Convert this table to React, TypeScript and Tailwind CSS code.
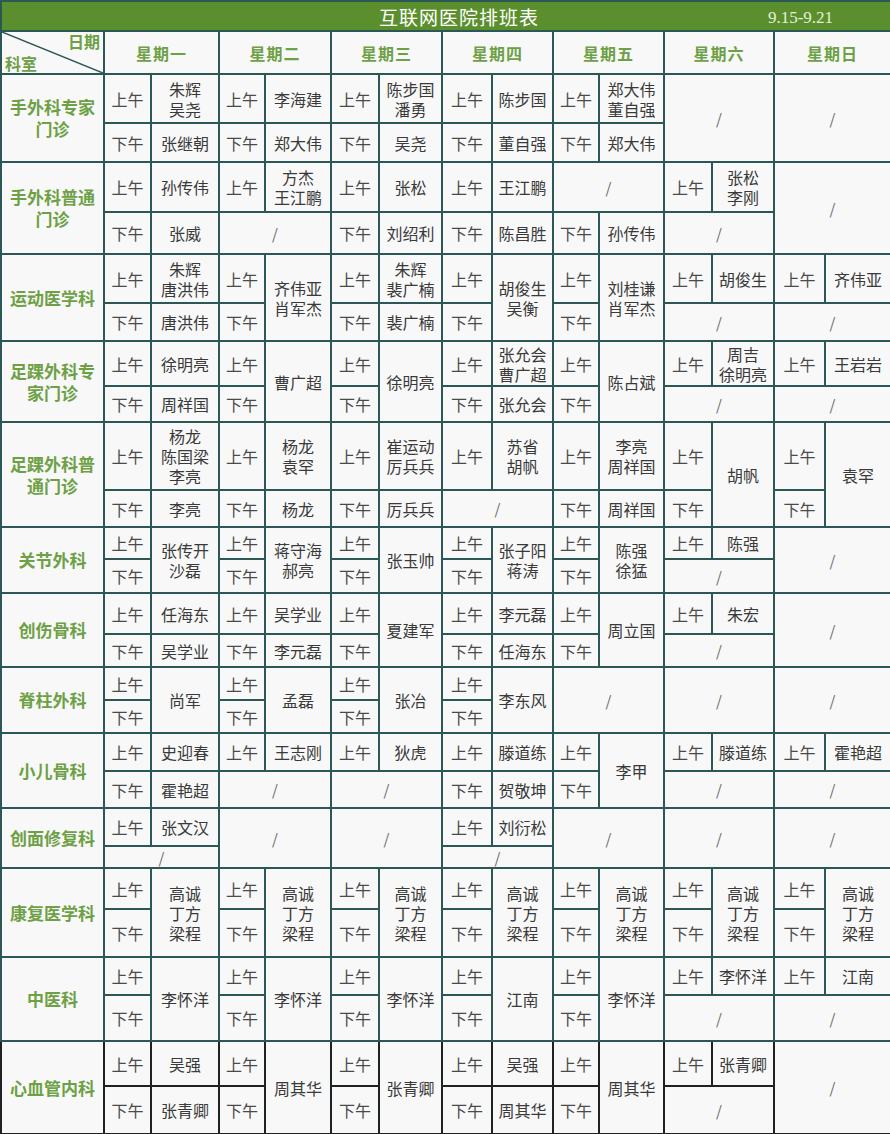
import React from 'react'

// A: 上午/下午 each with own name · B: one name over both halves · C: whole day "/"
// D: 上午 + name, 下午 "/" · E: 上午 "/", 下午 + name
type Day = ['A', string, string] | ['B', string] | ['C'] | ['D', string] | ['E', string]
type Dept = { name: string; h: [number, number]; days: Day[]; dark?: boolean }

const WIDTHS = [103, 47, 68, 46, 66, 48, 63, 50, 61, 46, 65, 48, 62, 51, 66]
const WEEK = ['星期一', '星期二', '星期三', '星期四', '星期五', '星期六', '星期日']

const DEPTS: Dept[] = [
  { name: '手外科专家\n门诊', h: [49, 39], days: [['A', '朱辉\n吴尧', '张继朝'], ['A', '李海建', '郑大伟'], ['A', '陈步国\n潘勇', '吴尧'], ['A', '陈步国', '董自强'], ['A', '郑大伟\n董自强', '郑大伟'], ['C'], ['C']] },
  { name: '手外科普通\n门诊', h: [50, 42], days: [['A', '孙传伟', '张威'], ['D', '方杰\n王江鹏'], ['A', '张松', '刘绍利'], ['A', '王江鹏', '陈昌胜'], ['E', '孙传伟'], ['D', '张松\n李刚'], ['C']] },
  { name: '运动医学科', h: [49, 38], days: [['A', '朱辉\n唐洪伟', '唐洪伟'], ['B', '齐伟亚\n肖军杰'], ['A', '朱辉\n裴广楠', '裴广楠'], ['B', '胡俊生\n吴衡'], ['B', '刘桂谦\n肖军杰'], ['D', '胡俊生'], ['D', '齐伟亚']] },
  { name: '足踝外科专\n家门诊', h: [45, 36], days: [['A', '徐明亮', '周祥国'], ['B', '曹广超'], ['B', '徐明亮'], ['A', '张允会\n曹广超', '张允会'], ['B', '陈占斌'], ['D', '周吉\n徐明亮'], ['D', '王岩岩']] },
  { name: '足踝外科普\n通门诊', h: [68, 37], days: [['A', '杨龙\n陈国梁\n李亮', '李亮'], ['A', '杨龙\n袁罕', '杨龙'], ['A', '崔运动\n厉兵兵', '厉兵兵'], ['D', '苏省\n胡帆'], ['A', '李亮\n周祥国', '周祥国'], ['B', '胡帆'], ['B', '袁罕']] },
  { name: '关节外科', h: [32, 34], days: [['B', '张传开\n沙磊'], ['B', '蒋守海\n郝亮'], ['B', '张玉帅'], ['B', '张子阳\n蒋涛'], ['B', '陈强\n徐猛'], ['D', '陈强'], ['C']] },
  { name: '创伤骨科', h: [41, 33], days: [['A', '任海东', '吴学业'], ['A', '吴学业', '李元磊'], ['B', '夏建军'], ['A', '李元磊', '任海东'], ['B', '周立国'], ['D', '朱宏'], ['C']] },
  { name: '脊柱外科', h: [33, 33], days: [['B', '尚军'], ['B', '孟磊'], ['B', '张冶'], ['B', '李东风'], ['C'], ['C'], ['C']] },
  { name: '小儿骨科', h: [38, 37], days: [['A', '史迎春', '霍艳超'], ['D', '王志刚'], ['D', '狄虎'], ['A', '滕道练', '贺敬坤'], ['B', '李甲'], ['D', '滕道练'], ['D', '霍艳超']] },
  { name: '创面修复科', h: [38, 22], days: [['D', '张文汉'], ['C'], ['C'], ['D', '刘衍松'], ['C'], ['C'], ['C']] },
  { name: '康复医学科', h: [41, 48], days: Array.from({ length: 7 }, () => ['B', '高诚\n丁方\n梁程'] as Day) },
  { name: '中医科', h: [38, 46], days: [['B', '李怀洋'], ['B', '李怀洋'], ['B', '李怀洋'], ['B', '江南'], ['B', '李怀洋'], ['D', '李怀洋'], ['D', '江南']] },
  { name: '心血管内科', h: [45, 48], dark: true, days: [['A', '吴强', '张青卿'], ['B', '周其华'], ['B', '张青卿'], ['A', '吴强', '周其华'], ['B', '周其华'], ['D', '张青卿'], ['C']] },
]

const FONT = 'font-["Noto_Sans_CJK_SC","Noto_Sans",sans-serif]'

function Cell({ dark, className = '', children, ...rest }: { dark?: boolean; className?: string; children?: React.ReactNode; rowSpan?: number; colSpan?: number }) {
  return (
    <td {...rest} className={`border-2 ${dark ? 'border-[#1e2222]' : 'border-[#2b5757]'} p-0 text-center align-middle ${className}`}>
      {children}
    </td>
  )
}

const label = 'text-[16px] leading-none text-[#4a4a4a]'
const person = 'text-[16px] leading-[20px] text-[#3a3a3a] whitespace-pre-line'
const slash = 'text-[15px] leading-none text-[#6b6b6b]'

function DeptRows({ d }: { d: Dept }) {
  const am: React.ReactNode[] = []
  const pm: React.ReactNode[] = []
  d.days.forEach((day, i) => {
    const k = d.name + i
    if (day[0] === 'A') {
      am.push(<Cell key={k + 'a'} dark={d.dark} className={label}>上午</Cell>, <Cell key={k + 'b'} dark={d.dark} className={person}>{day[1]}</Cell>)
      pm.push(<Cell key={k + 'c'} dark={d.dark} className={label}>下午</Cell>, <Cell key={k + 'd'} dark={d.dark} className={person}>{day[2]}</Cell>)
    } else if (day[0] === 'B') {
      am.push(<Cell key={k + 'a'} dark={d.dark} className={label}>上午</Cell>, <Cell key={k + 'b'} dark={d.dark} rowSpan={2} className={person}>{day[1]}</Cell>)
      pm.push(<Cell key={k + 'c'} dark={d.dark} className={label}>下午</Cell>)
    } else if (day[0] === 'C') {
      am.push(<Cell key={k + 'a'} dark={d.dark} rowSpan={2} colSpan={2} className={slash}>/</Cell>)
    } else if (day[0] === 'D') {
      am.push(<Cell key={k + 'a'} dark={d.dark} className={label}>上午</Cell>, <Cell key={k + 'b'} dark={d.dark} className={person}>{day[1]}</Cell>)
      pm.push(<Cell key={k + 'c'} dark={d.dark} colSpan={2} className={slash}>/</Cell>)
    } else {
      am.push(<Cell key={k + 'a'} dark={d.dark} colSpan={2} className={slash}>/</Cell>)
      pm.push(<Cell key={k + 'c'} dark={d.dark} className={label}>下午</Cell>, <Cell key={k + 'd'} dark={d.dark} className={person}>{day[1]}</Cell>)
    }
  })
  return (
    <>
      <tr style={{ height: d.h[0] }}>
        <Cell dark={d.dark} rowSpan={2} className="whitespace-pre-line text-[17px] font-bold leading-[22px] text-[#6ea046]">{d.name}</Cell>
        {am}
      </tr>
      <tr style={{ height: d.h[1] }}>{pm}</tr>
    </>
  )
}

export default function App() {
  return (
    <div className={`w-[890px] bg-[#f7f8f7] ${FONT}`}>
      <table className="w-[890px] table-fixed border-collapse">
        <colgroup>
          {WIDTHS.map((w, i) => <col key={i} style={{ width: w }} />)}
        </colgroup>
        <tbody>
          <tr className="h-[30px]">
            <td colSpan={15} className="border-2 border-[#2b5757] bg-[#5b8f2d] p-0">
              <div className="relative flex h-[28px] items-center justify-center pl-[26px]">
                <span className="text-[19px] leading-none tracking-[1px] text-white">互联网医院排班表</span>
                <span className="absolute right-[57px] top-[7px] font-['Liberation_Serif',serif] text-[17px] leading-none text-[#e6efd9]">9.15-9.21</span>
              </div>
            </td>
          </tr>
          <tr className="h-[43px]">
            <td className="relative border-2 border-[#2b5757] p-0">
              <svg className="absolute inset-0 h-full w-full" preserveAspectRatio="none">
                <line x1="0" y1="0" x2="100%" y2="100%" stroke="#2b5757" strokeWidth="1.5" />
              </svg>
              <div className="flex h-[41px] flex-col justify-between px-[3px] text-[16px] font-bold leading-[19px] text-[#6ea046]">
                <span className="self-end">日期</span>
                <span className="self-start">科室</span>
              </div>
            </td>
            {WEEK.map(w => (
              <td key={w} colSpan={2} className="border-2 border-[#2b5757] p-0 text-center text-[16px] font-bold tracking-[1px] text-[#6ea046]">{w}</td>
            ))}
          </tr>
          {DEPTS.map(d => <DeptRows key={d.name} d={d} />)}
        </tbody>
      </table>
    </div>
  )
}
